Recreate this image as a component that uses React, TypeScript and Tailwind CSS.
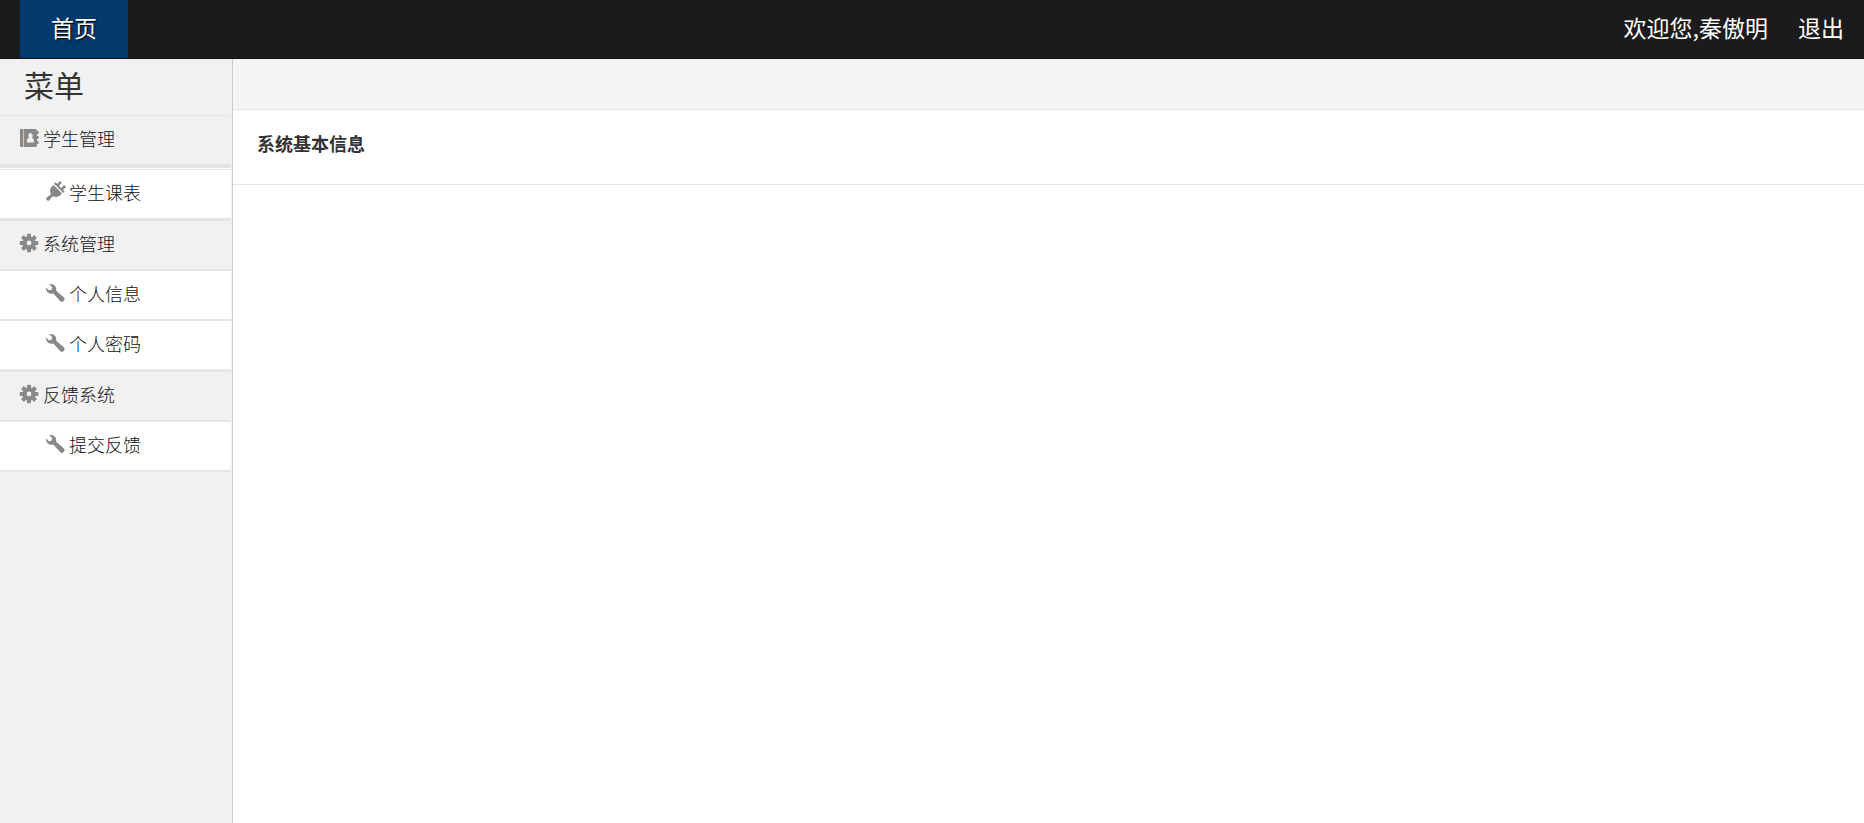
import type { ReactNode } from "react";

type IconName = "book" | "plug" | "gear" | "wrench";

const drawings: Record<IconName, ReactNode> = {
  book: (
    <>
      <path d="M1 0H3V18H1Q0 18 0 17V1Q0 0 1 0Z" />
      <path d="M3 0H4V18H3Z" className="text-[#d8c4b4]" fill="currentColor" />
      <path
        fillRule="evenodd"
        d="M4 0H15.500Q17 0 17 2H18.500V5H17V7H18.500V10H17V12H18.500V15H17V16Q17 18 15.500 18H4ZM10.500 4A2.500 2.700 0 0 0 9.200 8.800Q7 9.600 7 11.500V13.500H14V11.500Q14 9.600 11.800 8.800A2.500 2.700 0 0 0 10.500 4Z"
      />
    </>
  ),
  plug: (
    <g transform="rotate(45 9 9)">
      <path d="M4.800 -2Q6.100 -3.400 7.400 -2V2.500H4.800ZM10.600 -2Q11.900 -3.400 13.200 -2V2.500H10.600Z" />
      <path d="M2.500 1.800H15.500V3.800H2.500Z" />
      <path d="M3 5H15V8Q15 11.500 10.400 13.500V15.500L11 19.500Q9 21.500 7 19.500L7.600 15.500V13.500Q3 11.500 3 8Z" />
    </g>
  ),
  gear: (
    <>
      <circle cx="9" cy="9" r="4.600" fill="none" stroke="currentColor" strokeWidth="4.400" />
      {[0, 45, 90, 135, 180, 225, 270, 315].map((angle) => (
        <path key={angle} d="M7 3.400V-0.200H11V3.400Z" transform={`rotate(${angle} 9 9)`} />
      ))}
    </>
  ),
  wrench: (
    <path d="M3 0.300Q6.600 -0.900 9.200 1.900Q11 4.200 10.200 6.800L18 13.500Q19.300 15 18 16.800Q16.200 18.800 14.300 17.300L7.400 9.600Q4.200 10.300 1.800 8.400Q-0.500 6.200 0 3.200L2.800 6.200L5.600 5.700L6.200 3.100Z" />
  ),
};

function Icon({ name }: { name: IconName }) {
  return (
    <svg viewBox="0 0 18 18" className="size-[18px] shrink-0 overflow-visible text-[#888888]" fill="currentColor" aria-hidden="true">
      {drawings[name]}
    </svg>
  );
}

interface Entry {
  label: string;
  icon: IconName;
}

function GroupLink({ label, icon }: Entry) {
  return (
    <a href="#" className="flex h-12 items-center gap-[5px] px-5 pb-1">
      <Icon name={icon} />
      {label}
    </a>
  );
}

function SubLinks({ items }: { items: Entry[] }) {
  return (
    <ul className="divide-y-2 divide-[#e5e5e5] bg-white">
      {items.map((item) => (
        <li key={item.label}>
          <a href="#" className="flex h-12 items-center gap-[5px] pb-1 pl-[46px]">
            <Icon name={item.icon} />
            {item.label}
          </a>
        </li>
      ))}
    </ul>
  );
}

export default function App() {
  return (
    <div className="flex min-h-screen flex-col bg-white font-['Noto_Sans_CJK_SC',sans-serif] text-[#333333]">
      <header className="flex h-[59px] justify-between border-b border-[#111111] bg-[#1b1b1b] px-5 text-[23px] text-white">
        <a href="#" className="flex items-center bg-[#04396e] px-[31px] pb-1 text-shadow-[1px_1px_1px_#000000]">
          首页
        </a>
        <div className="flex items-center gap-[30px] pb-1">
          <span>欢迎您,秦傲明</span>
          <a href="#">退出</a>
        </div>
      </header>
      <div className="flex grow">
        <aside className="w-[233px] shrink-0 border-r border-[#cccccc] bg-[#f1f1f1] pr-px">
          <h1 className="flex h-[57px] items-center border-b border-[#e5e5e5] px-6 pb-1.5 text-[30px] font-normal">菜单</h1>
          <nav className="text-[18px] font-light text-[#111111]">
            <GroupLink label="学生管理" icon="book" />
            <div className="border-t-4 border-b-3 border-[#e5e5e5]">
              <div className="border-t border-white">
                <div className="border-t border-[#e5e5e5]">
                  <SubLinks items={[{ label: "学生课表", icon: "plug" }]} />
                </div>
              </div>
            </div>
            <GroupLink label="系统管理" icon="gear" />
            <div className="border-t-2 border-b-3 border-[#e5e5e5]">
              <SubLinks
                items={[
                  { label: "个人信息", icon: "wrench" },
                  { label: "个人密码", icon: "wrench" },
                ]}
              />
            </div>
            <GroupLink label="反馈系统" icon="gear" />
            <div className="border-y-2 border-[#e5e5e5]">
              <SubLinks items={[{ label: "提交反馈", icon: "wrench" }]} />
            </div>
          </nav>
        </aside>
        <main className="min-w-0 grow">
          <div className="h-[51px] border-b border-[#e5e5e5] bg-[#f5f5f5]" />
          <section className="flex h-[75px] items-center border-b border-[#e5e5e5] px-6 pb-2">
            <h2 className="text-[18px] font-bold">系统基本信息</h2>
          </section>
        </main>
      </div>
    </div>
  );
}
